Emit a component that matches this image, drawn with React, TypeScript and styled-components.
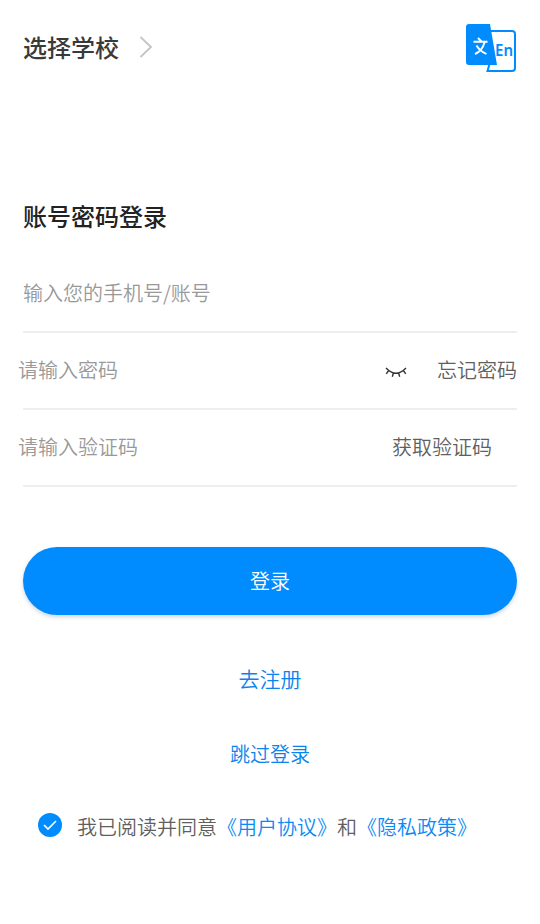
import React from "react";
import styled, { createGlobalStyle } from "styled-components";

const Global = createGlobalStyle`
  * { box-sizing: border-box; }
  body { margin: 0; background: #fff; font-family: "Noto Sans CJK SC", sans-serif; }
  button { border: 0; background: none; padding: 0; font: inherit; cursor: pointer; }
`;
const Screen = styled.main`
  height: 924px; padding: 0 23px; overflow: hidden; display: flex; flex-direction: column; align-items: stretch;
`;
const Header = styled.header`
  height: 96px; flex: none; display: flex; align-items: center; justify-content: space-between;
`;
const School = styled.button`
  display: flex; align-items: center; gap: 20px; color: #3a3a3a;
  span { font-size: 24px; font-weight: 500; line-height: 36px; margin-top: -2px; }
  svg { margin-top: -3px; }
`;
const Language = styled.button`
  height: 48px; margin-right: 1px;
  svg { display: block; }
`;
const Title = styled.h1`
  margin: 102px 0 0; height: 36px; flex: none; line-height: 36px; font-size: 24px; font-weight: 500; color: #222;
`;
const Form = styled.form`margin-top: 22px;`;
const Field = styled.div<{ $end?: number }>`
  height: 77px; display: flex; align-items: center; border-bottom: 2px solid #eee;
  padding: 0 ${p => p.$end ?? 0}px 2px 0;
`;
const Input = styled.input<{ $shift?: number }>`
  flex: 1; min-width: 0; height: 40px; margin-left: ${p => p.$shift ?? 0}px; border: 0; padding: 0;
  outline: none; font: 350 20px/30px "Noto Sans CJK SC", sans-serif; background: none; color: #333;
  &::placeholder { color: #999; opacity: 1; }
`;
const Action = styled.button`
  && { font-size: 20px; font-weight: 350; color: #5f5f5f; white-space: nowrap; }
`;
const Eye = styled.svg`margin: 4px 30px 0 0;`;
const Login = styled.button`
  && {
    margin-top: 60px; height: 68px; padding-bottom: 2px; flex: none; border-radius: 34px;
    color: #fff; font-size: 20px; font-weight: 350; background: #008cff;
    box-shadow: 0 2px 4px rgba(0, 50, 110, 0.2);
  }
`;
const LinkButton = styled.button<{ $top: number; $size: number }>`
  && {
    align-self: center; flex: none; margin-top: ${p => p.$top}px; height: 32px; line-height: 32px;
    font-size: ${p => p.$size}px; font-weight: 350; color: #0a84ec;
  }
`;
const Agreement = styled.div`
  display: flex; align-items: center; height: 32px; margin: 41px 0 0 15px; font-size: 20px; font-weight: 350;
  color: #5f5f5f; white-space: nowrap;
  svg { margin: -5px 15px 0 0; }
  span { margin-top: -2px; }
`;
const Policy = styled.a`color: #0a8af5;`;

export default function App() {
  return (
    <Screen>
      <Global />
      <Header>
        <School>
          <span>选择学校</span>
          <svg width="14" height="22" viewBox="0 0 14 22"><path d="M1.5 1l10.5 10L1.5 21" fill="none" stroke="#c4c4c4" strokeWidth="1.8" /></svg>
        </School>
        <Language aria-label="中文 / English">
          <svg width="50" height="48" viewBox="0 0 50 48">
            <path d="M25 7H46Q49 7 49 10V44Q49 47 46 47H21.5L23.5 40" fill="none" stroke="#008cff" strokeWidth="2" />
            <path d="M3 0H24L31 41H3Q0 41 0 38V3Q0 0 3 0Z" fill="#008cff" />
            <path d="M7.5 17.8H21.5M12 14L15.5 17.5M18.5 18.5C17 24 14 28 9 30M10.5 21.5C12.5 25 16 28 20.5 30" fill="none" stroke="#fff" strokeWidth="1.9" />
            <text x="29" y="32" fill="#008cff" fontFamily="Noto Sans, sans-serif" fontSize="16" fontWeight="600" textLength="18" lengthAdjust="spacingAndGlyphs">En</text>
          </svg>
        </Language>
      </Header>
      <Title>账号密码登录</Title>
      <Form>
        <Field><Input placeholder="输入您的手机号/账号" /></Field>
        <Field><Input $shift={-5} type="password" placeholder="请输入密码" />
          <Eye width="22" height="12" viewBox="0 0 22 12" fill="none" stroke="#333" strokeWidth="1.4">
            <path d="M1 2Q11 12.5 21 2M3.6 4.5L1.3 7.8M8.4 7L7.3 10.8M13.6 7L14.7 10.8M18.4 4.5L20.7 7.8" />
          </Eye>
          <Action type="button">忘记密码</Action>
        </Field>
        <Field $end={25}><Input $shift={-5} placeholder="请输入验证码" /><Action type="button">获取验证码</Action></Field>
      </Form>
      <Login>登录</Login>
      <LinkButton $top={47} $size={21}>去注册</LinkButton>
      <LinkButton $top={44} $size={20}>跳过登录</LinkButton>
      <Agreement>
        <svg width="24" height="24" viewBox="0 0 24 24"><circle cx="12" cy="12" r="12" fill="#008cff" /><path d="M6 12l4 4 8-8" fill="none" stroke="#fff" strokeWidth="1.7" /></svg>
        <span>我已阅读并同意<Policy>《用户协议》</Policy>和<Policy>《隐私政策》</Policy></span>
      </Agreement>
    </Screen>
  );
}
